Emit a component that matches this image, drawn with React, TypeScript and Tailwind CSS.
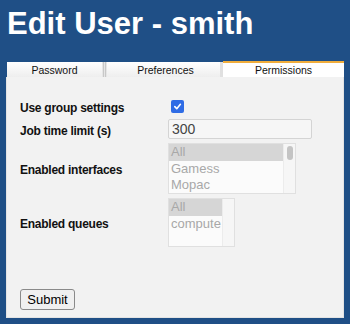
import React from "react";

export default function App() {
  const font = { fontFamily: '"Liberation Sans", Arial, sans-serif' };
  return (
    <div className="w-[350px] h-[324px] bg-[#1f4f86] overflow-hidden" style={font}>
      <h1 className="h-[61px] pl-[7px] pt-[6px] text-[31px] leading-[36px] font-bold text-white">
        Edit User - smith
      </h1>
      <div className="mx-[6px] h-[257px] flex flex-col">
        <div className="flex h-[16px] text-[10.5px] leading-[16px] text-[#111]">
          <div className="w-[95px] ml-[1px] mt-[1px] bg-gradient-to-b from-[#ffffff] to-[#eeeeee] text-center">
            Password
          </div>
          <div className="w-[5px] flex justify-center gap-[1px] bg-[#e6e6e6] mt-[1px]">
            <div className="w-[1px] bg-[#c8c8c8]" />
            <div className="w-[1px] bg-[#c8c8c8]" />
          </div>
          <div className="w-[113px] mt-[1px] bg-gradient-to-b from-[#ffffff] to-[#eeeeee] text-center pl-[4px]">
            Preferences
          </div>
          <div className="w-[3px] bg-[#e0e0e0] mt-[1px]" />
          <div className="flex-1 border-t-2 border-[#f0ad3c] bg-white text-center leading-[14px]">
            Permissions
          </div>
        </div>
        <div className="flex-1 bg-[#f2f2f2] border-x border-b border-[#e4e4e4] pl-[13px] pt-[22px] text-[12px] tracking-[-0.25px] text-[#111]">
          <div className="flex items-center h-[14px]">
            <div className="w-[150px] font-bold pt-[3px]">Use group settings</div>
            <div className="ml-[1px] w-[13px] h-[13px] rounded-[2px] bg-[#2f6ce5] flex items-center justify-center">
              <svg width="9" height="9" viewBox="0 0 10 10">
                <path d="M2 5.2 L4.2 7.4 L8.2 2.6" stroke="white" strokeWidth="1.8" fill="none" strokeLinecap="round" strokeLinejoin="round" />
              </svg>
            </div>
          </div>
          <div className="flex items-center h-[20px] mt-[6px]">
            <div className="w-[148px] font-bold pt-[3px]">Job time limit (s)</div>
            <div className="w-[144px] h-[20px] border border-[#d4d4d4] rounded-[2px] bg-[#f6f6f6] text-[14px] tracking-normal leading-[18px] text-[#444] pl-[3px]">
              300
            </div>
          </div>
          <div className="flex items-center mt-[4px]">
            <div className="w-[148px] font-bold pt-[3px]">Enabled interfaces</div>
            <div className="w-[128px] h-[51px] border border-[#e0e0e0] bg-[#fbfbfb] flex text-[13px] tracking-normal leading-[16.5px] text-[#a8a8a8]">
              <div className="flex-1">
                <div className="bg-[#d6d6d6] pl-[2px]">All</div>
                <div className="pl-[2px]">Gamess</div>
                <div className="pl-[2px]">Mopac</div>
              </div>
              <div className="w-[12px] bg-[#f6f6f6] border-l border-[#ececec] flex justify-center pt-[2px]">
                <div className="w-[6px] h-[14px] rounded-full bg-[#c4c4c4]" />
              </div>
            </div>
          </div>
          <div className="flex items-center mt-[4px]">
            <div className="w-[148px] font-bold pt-[3px]">Enabled queues</div>
            <div className="w-[67px] h-[49px] border border-[#e0e0e0] bg-[#fbfbfb] flex text-[13px] tracking-normal leading-[16.5px] text-[#a8a8a8]">
              <div className="flex-1">
                <div className="bg-[#d6d6d6] pl-[2px]">All</div>
                <div className="pl-[2px]">compute</div>
              </div>
              <div className="w-[12px] bg-[#f6f6f6] border-l border-[#ececec]" />
            </div>
          </div>
          <button className="mt-[42px] w-[55px] h-[21px] border border-[#8a8a8a] rounded-[3px] bg-[#f0f0f0] text-[13px] tracking-normal leading-[18px] text-black">
            Submit
          </button>
        </div>
      </div>
    </div>
  );
}
